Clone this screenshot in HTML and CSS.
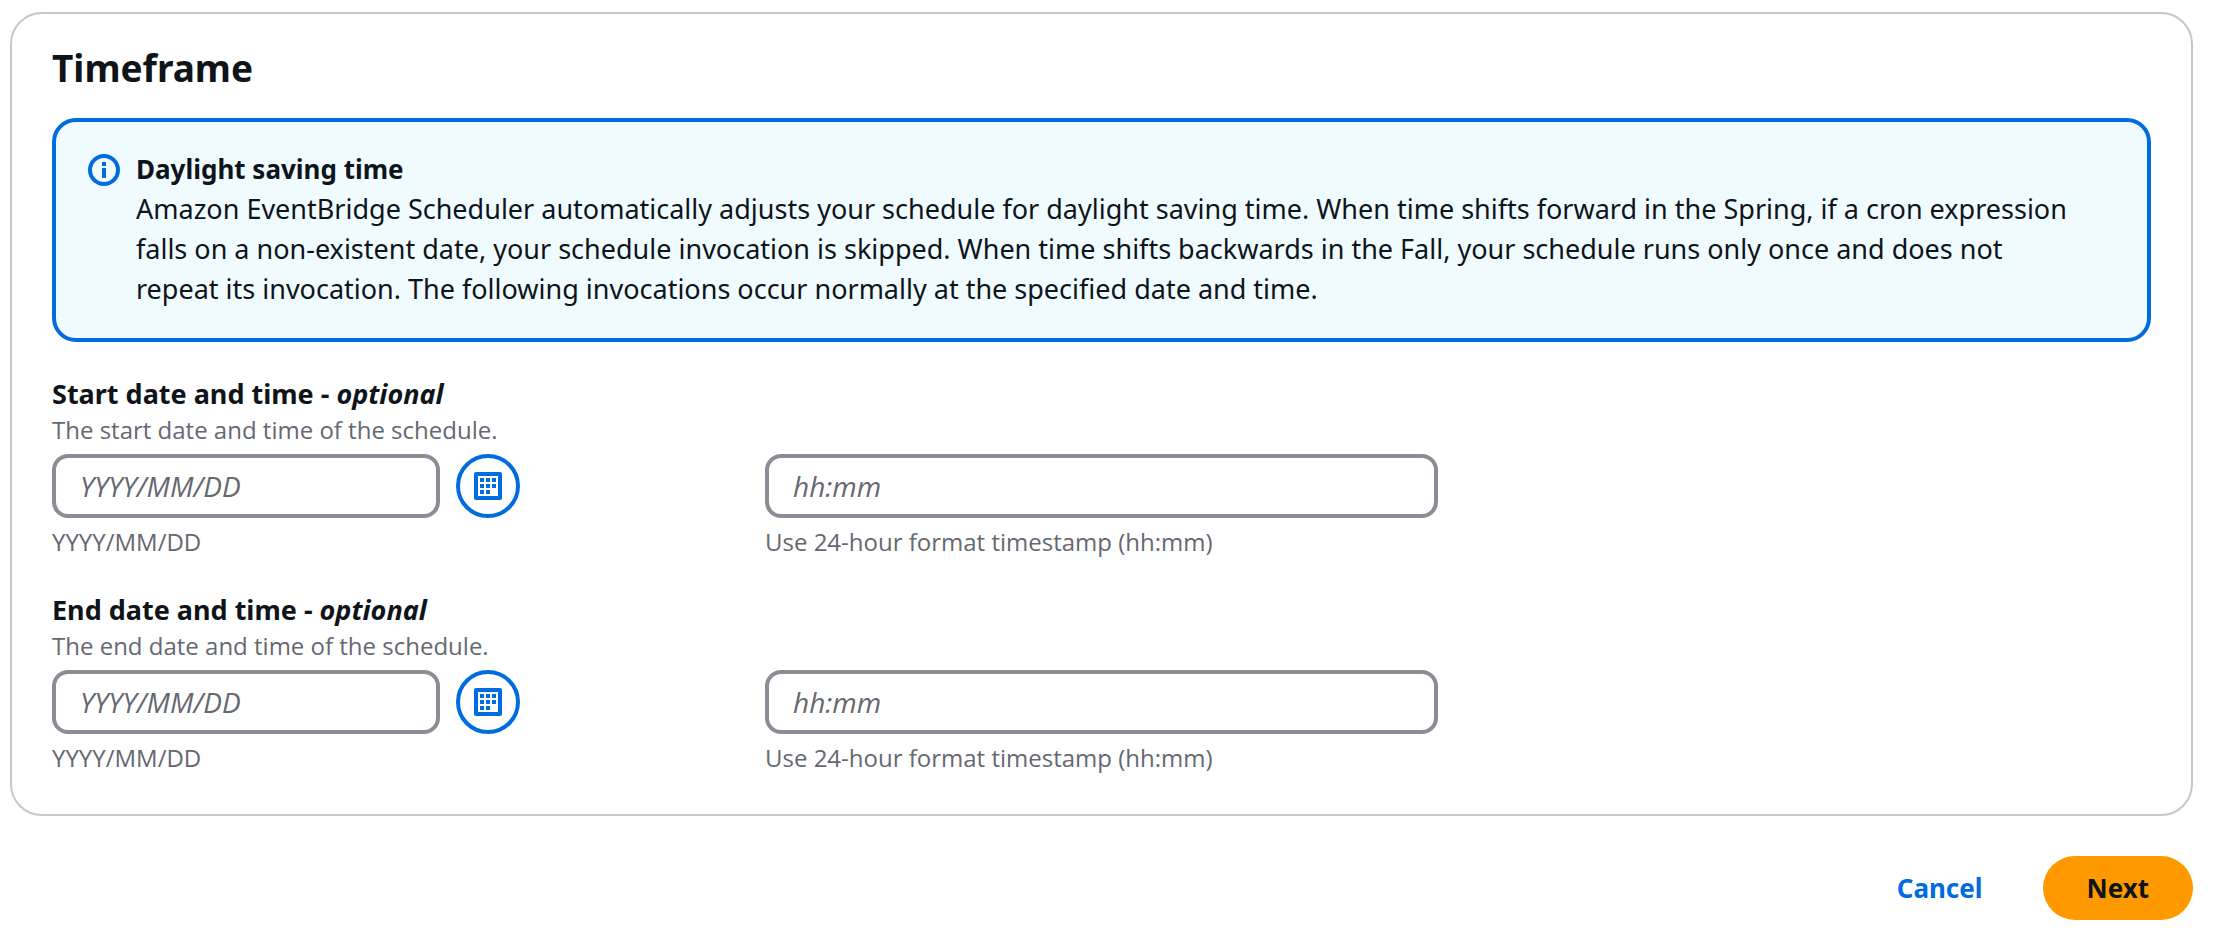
FILE: index.html
```html
<!DOCTYPE html>
<html lang="en">
<head>
<meta charset="utf-8">
<title>Timeframe</title>
<link rel="stylesheet" href="styles.css">
</head>
<body>
<svg class="sprite" aria-hidden="true">
  <symbol id="calendar" viewBox="0 0 32 32">
    <rect x="4" y="4" width="24" height="24" fill="none" stroke="currentColor" stroke-width="4" stroke-linejoin="round"/>
    <path fill="currentColor" d="M8 8h4v4H8zM14 8h4v4h-4zM20 8h4v4h-4zM8 14h4v4H8zM14 14h4v4h-4zM20 14h4v4h-4zM8 20h4v4H8zM14 20h4v4h-4z"/>
  </symbol>
</svg>
<form class="page">
  <section class="card">
    <h2 class="card-title">Timeframe</h2>
    <div class="alert" role="status">
      <svg class="icon" viewBox="0 0 32 32" aria-hidden="true">
        <circle cx="16" cy="16" r="14" fill="none" stroke="currentColor" stroke-width="4"/>
        <path fill="currentColor" d="M14 8h4v4h-4zM14 14h4v10h-4z"/>
      </svg>
      <div class="alert-body">
        <strong class="alert-title">Daylight saving time</strong>
        <p class="alert-text">Amazon EventBridge Scheduler automatically adjusts your schedule for daylight saving time. When time shifts forward in the Spring, if a cron expression falls on a non-existent date, your schedule invocation is skipped. When time shifts backwards in the Fall, your schedule runs only once and does not repeat its invocation. The following invocations occur normally at the specified date and time.</p>
      </div>
    </div>
    <div class="field">
      <label class="label" for="start-date">Start date and time - <em>optional</em></label>
      <p class="hint">The start date and time of the schedule.</p>
      <div class="columns">
        <div class="column">
          <div class="date">
            <input class="input" id="start-date" type="text" placeholder="YYYY/MM/DD">
            <button class="calendar-button" type="button" aria-label="Choose start date"><svg class="icon"><use href="#calendar"/></svg></button>
          </div>
          <p class="hint">YYYY/MM/DD</p>
        </div>
        <div class="column">
          <input class="input" type="text" placeholder="hh:mm" aria-label="Start time">
          <p class="hint">Use 24-hour format timestamp (hh:mm)</p>
        </div>
      </div>
    </div>
    <div class="field">
      <label class="label" for="end-date">End date and time - <em>optional</em></label>
      <p class="hint">The end date and time of the schedule.</p>
      <div class="columns">
        <div class="column">
          <div class="date">
            <input class="input" id="end-date" type="text" placeholder="YYYY/MM/DD">
            <button class="calendar-button" type="button" aria-label="Choose end date"><svg class="icon"><use href="#calendar"/></svg></button>
          </div>
          <p class="hint">YYYY/MM/DD</p>
        </div>
        <div class="column">
          <input class="input" type="text" placeholder="hh:mm" aria-label="End time">
          <p class="hint">Use 24-hour format timestamp (hh:mm)</p>
        </div>
      </div>
    </div>
  </section>
  <div class="actions">
    <button class="button button-link" type="button">Cancel</button>
    <button class="button button-primary" type="button">Next</button>
  </div>
</form>
</body>
</html>
```
FILE: styles.css
```css
* {
  box-sizing: border-box;
}

body {
  margin: 0;
  background: #fff;
  color: #0f141a;
  font-family: "Noto Sans", "Open Sans", sans-serif;
  font-size: 27px;
  line-height: 40px;
}

h2,
p {
  margin: 0;
}

button,
input {
  font: inherit;
}

.sprite {
  display: none;
}

.page {
  padding: 12px 25px 8px 10px;
}

.card {
  display: flex;
  flex-direction: column;
  gap: 32px;
  padding: 30px 40px 40px;
  border: 2px solid #c6c6cd;
  border-radius: 32px;
}

.card-title {
  margin-bottom: -6px;
  font-size: 37px;
  line-height: 48px;
}

.icon {
  flex: none;
  display: block;
  width: 32px;
  height: 32px;
}

.alert {
  display: flex;
  gap: 16px;
  padding: 27px 32px 29px;
  border: 4px solid #006ce0;
  border-radius: 24px;
  background: #f0fbff;
}

.alert > .icon {
  margin-top: 5px;
  color: #006ce0;
}

.alert-body {
  padding-right: 40px;
}

.alert-title {
  display: block;
  font-size: 26px;
}

.label {
  display: block;
  font-size: 27px;
  font-weight: 700;
}

.hint {
  color: #656871;
  font-family: "Open Sans", "Noto Sans", sans-serif;
  font-size: 24px;
  line-height: 32px;
}

.columns {
  display: grid;
  grid-template-columns: repeat(3, 1fr);
  gap: 40px;
  margin-top: 8px;
}

.column {
  display: flex;
  flex-direction: column;
  gap: 8px;
}

.date {
  display: flex;
  gap: 16px;
}

.date .input {
  width: 388px;
}

.input {
  width: 100%;
  height: 64px;
  padding: 0 24px;
  border: 4px solid #8c8c94;
  border-radius: 16px;
  background: #fff;
  color: #0f141a;
  font-family: "Open Sans", "Noto Sans", sans-serif;
  font-size: 28px;
}

.input::placeholder {
  color: #656871;
  font-style: italic;
  opacity: 1;
}

.calendar-button {
  display: flex;
  align-items: center;
  justify-content: center;
  width: 64px;
  height: 64px;
  padding: 0;
  border: 4px solid #006ce0;
  border-radius: 50%;
  background: #fff;
  color: #006ce0;
}

.actions {
  display: flex;
  justify-content: flex-end;
  gap: 16px;
  margin-top: 40px;
}

.button {
  height: 64px;
  padding: 0 44px;
  border: 0;
  border-radius: 32px;
  font-size: 26px;
  font-weight: 700;
}

.button-link {
  background: transparent;
  color: #006ce0;
}

.button-primary {
  background: #ff9900;
  color: #0f141a;
}
```
